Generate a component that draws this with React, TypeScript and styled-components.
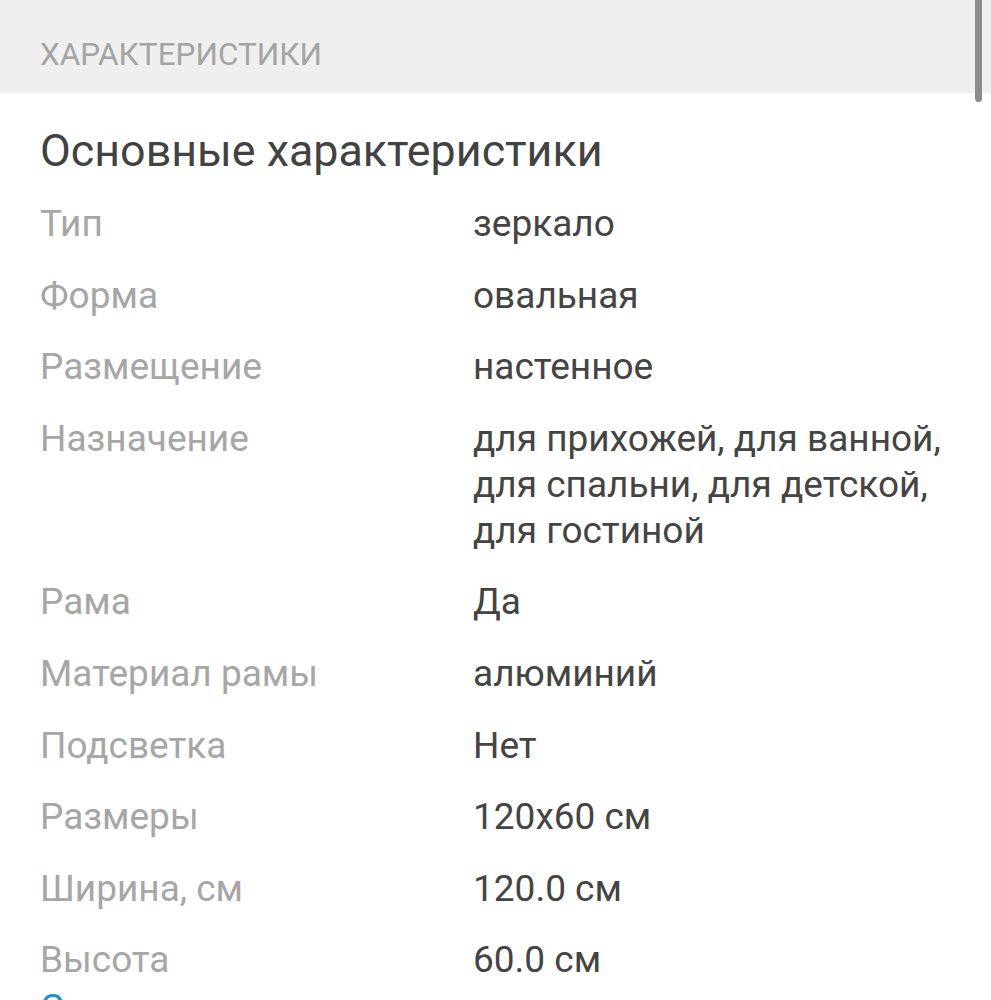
import React from "react";
import styled, { createGlobalStyle } from "styled-components";

const Global = createGlobalStyle`
  html, body { margin: 0; padding: 0; background: #ffffff; overflow: hidden; }
  body { font-family: Roboto, "Noto Sans", sans-serif; }
`;

const Page = styled.div`
  position: relative;
  width: 991px;
  height: 1000px;
  overflow: hidden;
  background: #ffffff;
`;

const Header = styled.div`
  height: 93px;
  background: #efefef;
  padding: 35px 40px 0 40px;
  box-sizing: border-box;
`;

const HeaderTitle = styled.div`
  font-family: Roboto, sans-serif;
  font-size: 31.5px;
  line-height: 40px;
  color: #a4a4a4;
`;

const Scrollbar = styled.div`
  position: absolute;
  top: 0;
  right: 9px;
  width: 7px;
  height: 102px;
  background: #8c8c8c;
  border-radius: 0 0 4px 4px;
`;

const Content = styled.div`
  padding: 32px 40px 0 40px;
`;

const SectionTitle = styled.h2`
  margin: 0 0 24px 0;
  font-family: Roboto, sans-serif;
  font-weight: 400;
  font-size: 44.8px;
  line-height: 52px;
  color: #424242;
`;

const Table = styled.div`
  display: grid;
  grid-template-columns: 433px 1fr;
  row-gap: 25.6px;
`;

const Label = styled.div`
  font-size: 37px;
  line-height: 46px;
  color: #a6a6a6;
`;

const Value = styled.div`
  font-size: 37px;
  line-height: 46px;
  color: #444444;
  white-space: pre-line;
`;

const Link = styled.div`
  margin-top: 2px;
  font-size: 37px;
  line-height: 46px;
  color: #1a8fd3;
`;

const rows: [string, string][] = [
  ["Тип", "зеркало"],
  ["Форма", "овальная"],
  ["Размещение", "настенное"],
  ["Назначение", "для прихожей, для ванной,\nдля спальни, для детской,\nдля гостиной"],
  ["Рама", "Да"],
  ["Материал рамы", "алюминий"],
  ["Подсветка", "Нет"],
  ["Размеры", "120x60 см"],
  ["Ширина, см", "120.0 см"],
  ["Высота", "60.0 см"],
];

export default function App() {
  return (
    <Page>
      <Global />
      <Header>
        <HeaderTitle>ХАРАКТЕРИСТИКИ</HeaderTitle>
      </Header>
      <Scrollbar />
      <Content>
        <SectionTitle>Основные характеристики</SectionTitle>
        <Table>
          {rows.map(([l, v]) => (
            <React.Fragment key={l}>
              <Label>{l}</Label>
              <Value>{v}</Value>
            </React.Fragment>
          ))}
        </Table>
        <Link>Скрыть</Link>
      </Content>
    </Page>
  );
}
